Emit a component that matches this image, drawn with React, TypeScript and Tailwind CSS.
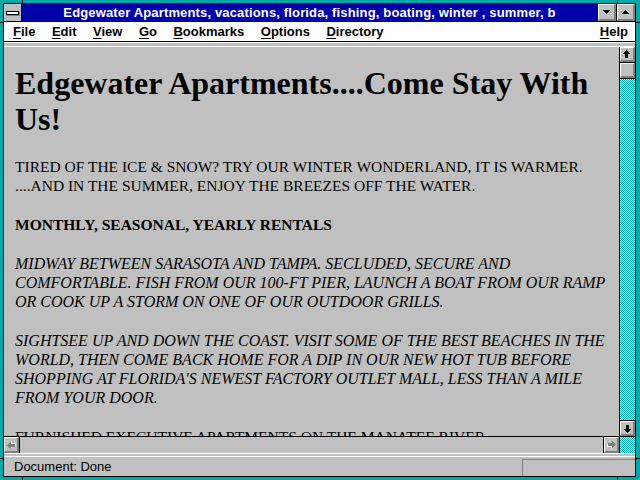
import React from "react";

const sans = "font-['Liberation_Sans',Arial,sans-serif]";
const serif = "font-['Liberation_Serif','Times_New_Roman',serif]";
const checker =
  "bg-[image:repeating-conic-gradient(#00a8a8_0_25%,#ffffff_0_50%)] bg-[length:2px_2px]";

function Arrow({ className = "", disabled = false }: { className?: string; disabled?: boolean }) {
  const d = "M3 0h1v1h1v1h1v1h1v1H5v4H2V4H0V3h1V2h1V1h1z";
  return (
    <svg width="8" height="9" viewBox="0 0 8 9" className={className} shapeRendering="crispEdges">
      {disabled ? (
        <>
          <path d={d} fill="#ffffff" transform="translate(1 1)" />
          <path d={d} fill="#808080" />
        </>
      ) : (
        <path d={d} fill="#000000" />
      )}
    </svg>
  );
}

function Bevel({ children, className = "" }: { children?: React.ReactNode; className?: string }) {
  return (
    <div
      className={`h-full w-full bg-[#c0c0c0] border-t border-l border-white border-b-2 border-r-2 border-b-[#808080] border-r-[#808080] flex items-center justify-center ${className}`}
    >
      {children}
    </div>
  );
}

function Tri({ up }: { up?: boolean }) {
  return (
    <svg width="7" height="4" viewBox="0 0 7 4" shapeRendering="crispEdges">
      {up ? <path d="M3 0h1v1h1v1h1v1h1v1H0V3h1V2h1V1h1z" fill="#000" /> : <path d="M0 0h7v1H6v1H5v1H4v1H3V3H2V2H1V1H0z" fill="#000" />}
    </svg>
  );
}

const menus = [
  ["F", "ile"],
  ["E", "dit"],
  ["V", "iew"],
  ["G", "o"],
  ["B", "ookmarks"],
  ["O", "ptions"],
  ["D", "irectory"],
];

export default function App() {
  return (
    <div className="w-[640px] h-[480px] bg-[#00a8a8] pt-[3px] pl-[3px] pr-[4px] pb-[3px] relative overflow-hidden">
      {/* resize corner marks */}
      <div className="absolute left-[22px] top-0 w-px h-[3px] bg-black" />
      <div className="absolute left-[617px] top-0 w-px h-[3px] bg-black" />
      <div className="absolute left-[22px] bottom-0 w-px h-[3px] bg-black" />
      <div className="absolute left-[617px] bottom-0 w-px h-[3px] bg-black" />
      <div className="absolute left-0 top-[22px] w-[3px] h-px bg-black" />
      <div className="absolute left-0 top-[458px] w-[3px] h-px bg-black" />
      <div className="absolute right-0 top-[22px] w-[4px] h-px bg-black" />
      <div className="absolute right-0 top-[458px] w-[4px] h-px bg-black" />

      <div className="h-full border border-black flex flex-col bg-[#c0c0c0]">
        {/* title bar */}
        <div className="h-[18px] border-b border-black flex shrink-0">
          <div className="w-[18px] border-r border-black bg-[#c0c0c0] flex items-start pt-[7px] pl-[2px]">
            <div className="w-[13px] h-[4px] bg-white border border-black shadow-[1px_1px_0_#808080]" />
          </div>
          <div
            className={`flex-1 bg-[#0000a8] text-white font-bold text-[13px] tracking-[0.15px] leading-[17px] text-center whitespace-nowrap overflow-hidden ${sans}`}
          >
            Edgewater Apartments, vacations, florida, fishing, boating, winter , summer, b
          </div>
          <div className="w-[19px] border-l border-black">
            <Bevel>
              <Tri />
            </Bevel>
          </div>
          <div className="w-[19px] border-l border-black">
            <Bevel>
              <Tri up />
            </Bevel>
          </div>
        </div>

        {/* menu bar */}
        <div className={`h-[20px] border-b border-black bg-white flex items-center shrink-0 text-[13px] font-bold text-black ${sans}`}>
          <div className="flex gap-[16.5px] pl-[9px]">
            {menus.map(([k, rest]) => (
              <span key={k}>
                <span className="underline underline-offset-[2px]">{k}</span>
                {rest}
              </span>
            ))}
          </div>
          <span className="ml-auto pr-[7px]">
            <span className="underline underline-offset-[2px]">H</span>elp
          </span>
        </div>

        <div className="h-[5px] border-t border-white border-b border-black shrink-0" />

        {/* document area */}
        <div className="flex-1 flex min-h-0">
          <div className="flex-1 flex flex-col min-w-0">
            <div className={`flex-1 overflow-hidden pl-[11px] pt-[18px] text-black whitespace-nowrap ${serif}`}>
              <h1 className="text-[32px] leading-[36px] font-bold mb-[20px]">
                Edgewater Apartments....Come Stay With
                <br />
                Us!
              </h1>
              <p className="text-[15.5px] leading-[19px] mb-[20px]">
                TIRED OF THE ICE &amp; SNOW? TRY OUR WINTER WONDERLAND, IT IS WARMER.
                <br />
                ....AND IN THE SUMMER, ENJOY THE BREEZES OFF THE WATER.
              </p>
              <p className="text-[15.5px] leading-[19px] mb-[20px] font-bold">MONTHLY, SEASONAL, YEARLY RENTALS</p>
              <p className="text-[16px] leading-[19px] mb-[20px] italic">
                MIDWAY BETWEEN SARASOTA AND TAMPA. SECLUDED, SECURE AND
                <br />
                COMFORTABLE. FISH FROM OUR 100-FT PIER, LAUNCH A BOAT FROM OUR RAMP
                <br />
                OR COOK UP A STORM ON ONE OF OUR OUTDOOR GRILLS.
              </p>
              <p className="text-[16px] leading-[19px] mb-[20px] italic">
                SIGHTSEE UP AND DOWN THE COAST. VISIT SOME OF THE BEST BEACHES IN THE
                <br />
                WORLD, THEN COME BACK HOME FOR A DIP IN OUR NEW HOT TUB BEFORE
                <br />
                SHOPPING AT FLORIDA'S NEWEST FACTORY OUTLET MALL, LESS THAN A MILE
                <br />
                FROM YOUR DOOR.
              </p>
              <p className="text-[15.5px] leading-[19px]">FURNISHED EXECUTIVE APARTMENTS ON THE MANATEE RIVER</p>
            </div>
            {/* horizontal scrollbar */}
            <div className="h-[17px] border-t border-black flex shrink-0">
              <div className="w-[16px] border-r border-black">
                <Bevel>
                  <Arrow disabled className="-rotate-90" />
                </Bevel>
              </div>
              <div className="flex-1 bg-[#c0c0c0]" />
              <div className="w-[16px] border-l border-black">
                <Bevel>
                  <Arrow disabled className="rotate-90" />
                </Bevel>
              </div>
            </div>
          </div>
          {/* vertical scrollbar */}
          <div className="w-[16px] border-l border-black flex flex-col shrink-0">
            <div className="h-[16px] border-b border-black shrink-0">
              <Bevel>
                <Arrow />
              </Bevel>
            </div>
            <div className="h-[16px] border-b border-black shrink-0">
              <Bevel />
            </div>
            <div className={`flex-1 ${checker}`} />
            <div className="h-[17px] border-t border-b border-black shrink-0">
              <Bevel>
                <Arrow className="rotate-180" />
              </Bevel>
            </div>
            <div className={`h-[16px] shrink-0 ${checker}`} />
          </div>
        </div>

        <div className="h-[4px] border-t border-white border-b border-black shrink-0" />

        {/* status bar */}
        <div className={`h-[19px] flex shrink-0 text-[13px] text-black ${sans}`}>
          <div className="flex-1 pl-[10px] leading-[19px]">Document: Done</div>
          <div className="w-[113px] h-[17px] mt-[2px] border-t border-l border-[#808080] border-b-white border-r-white" />
        </div>
      </div>
    </div>
  );
}
